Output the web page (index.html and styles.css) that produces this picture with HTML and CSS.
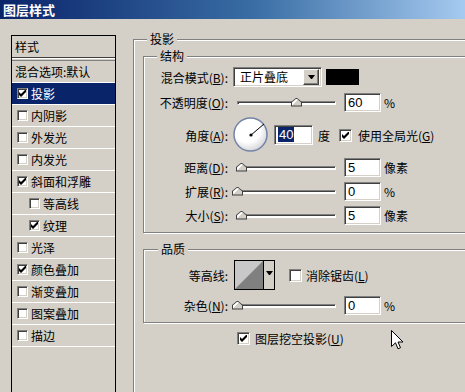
FILE: index.html
```html
<!DOCTYPE html>
<html lang="zh-CN">
<head>
    <meta charset="UTF-8">
    <title>图层样式</title>
    <link rel="stylesheet" href="styles.css">
</head>
<body>

    <div class="titlebar">图层样式</div>

    <div class="dialog">
        <!-- left: list of layer styles -->
        <div class="styles-list">
            <div class="list-head">样式</div>
            <div class="list-sep"></div>
            <div class="list-item plain">混合选项:默认</div>
            <div class="list-item selected"><span class="check small"><svg viewBox="0 0 7 7" width="7" height="7"><polygon points="0,2 2,4 7,-1 7,2 2,7 0,5" fill="#000"/></svg></span>投影</div>
            <div class="list-item"><span class="check small"></span>内阴影</div>
            <div class="list-item"><span class="check small"></span>外发光</div>
            <div class="list-item"><span class="check small"></span>内发光</div>
            <div class="list-item"><span class="check small"><svg viewBox="0 0 7 7" width="7" height="7"><polygon points="0,2 2,4 7,-1 7,2 2,7 0,5" fill="#000"/></svg></span>斜面和浮雕</div>
            <div class="list-item sub"><span class="check small"></span>等高线</div>
            <div class="list-item sub"><span class="check small"><svg viewBox="0 0 7 7" width="7" height="7"><polygon points="0,2 2,4 7,-1 7,2 2,7 0,5" fill="#000"/></svg></span>纹理</div>
            <div class="list-item"><span class="check small"></span>光泽</div>
            <div class="list-item"><span class="check small"><svg viewBox="0 0 7 7" width="7" height="7"><polygon points="0,2 2,4 7,-1 7,2 2,7 0,5" fill="#000"/></svg></span>颜色叠加</div>
            <div class="list-item"><span class="check small"></span>渐变叠加</div>
            <div class="list-item"><span class="check small"></span>图案叠加</div>
            <div class="list-item"><span class="check small"></span>描边</div>
        </div>

        <!-- right: drop shadow settings -->
        <div class="panel">
            <fieldset class="group outer">
                <legend>投影</legend>

                <fieldset class="group">
                    <legend>结构</legend>
                    <div class="rows">
                        <div class="row">
                            <span class="label">混合模式(<u>B</u>):</span>
                            <div class="select">
                                <span class="select-text">正片叠底</span>
                                <span class="select-btn"><span class="arrow"></span></span>
                            </div>
                            <span class="swatch"></span>
                        </div>
                        <div class="row">
                            <span class="label">不透明度(<u>O</u>):</span>
                            <div class="slider"><span class="track"></span><span class="thumb" style="left: 59px"></span></div>
                            <span class="field">60</span>
                            <span class="unit">%</span>
                        </div>
                        <div class="row">
                            <span class="label">角度(<u>A</u>):</span>
                            <svg class="dial" width="36" height="36" viewBox="0 0 36 36">
                                <defs>
                                    <radialGradient id="dialFill" cx="40%" cy="35%" r="65%">
                                        <stop offset="60%" stop-color="#ffffff"/>
                                        <stop offset="100%" stop-color="#d8d8dc"/>
                                    </radialGradient>
                                </defs>
                                <circle cx="17.5" cy="17.5" r="16.5" fill="url(#dialFill)" stroke="#7384a8" stroke-width="1.5"/>
                                <line x1="18" y1="18" x2="31" y2="7" stroke="#000" stroke-width="1"/>
                                <circle cx="18" cy="18" r="1.6" fill="#000"/>
                            </svg>
                            <span class="field wide"><span class="hilite">40</span></span>
                            <span class="unit deg">度</span>
                            <span class="check global"><svg viewBox="0 0 7 7" width="7" height="7"><polygon points="0,2 2,4 7,-1 7,2 2,7 0,5" fill="#000"/></svg></span>
                            <span class="check-label">使用全局光(<u>G</u>)</span>
                        </div>
                        <div class="row">
                            <span class="label">距离(<u>D</u>):</span>
                            <div class="slider"><span class="track"></span><span class="thumb" style="left: 4px"></span></div>
                            <span class="field">5</span>
                            <span class="unit">像素</span>
                        </div>
                        <div class="row">
                            <span class="label">扩展(<u>R</u>):</span>
                            <div class="slider"><span class="track"></span><span class="thumb" style="left: 0px"></span></div>
                            <span class="field">0</span>
                            <span class="unit">%</span>
                        </div>
                        <div class="row">
                            <span class="label">大小(<u>S</u>):</span>
                            <div class="slider"><span class="track"></span><span class="thumb" style="left: 4px"></span></div>
                            <span class="field">5</span>
                            <span class="unit">像素</span>
                        </div>
                    </div>
                </fieldset>

                <fieldset class="group quality">
                    <legend>品质</legend>
                    <div class="rows">
                        <div class="row">
                            <span class="label">等高线:</span>
                            <div class="contour">
                                <svg class="contour-preview" width="30" height="30" viewBox="0 0 30 30">
                                    <rect width="30" height="30" fill="#c8c8c8"/>
                                    <polygon points="0,30 30,0 30,30" fill="#808080"/>
                                </svg>
                                <span class="contour-btn"><span class="arrow"></span></span>
                            </div>
                            <span class="check antialias"></span>
                            <span class="check-label">消除锯齿(<u>L</u>)</span>
                        </div>
                        <div class="row">
                            <span class="label">杂色(<u>N</u>):</span>
                            <div class="slider"><span class="track"></span><span class="thumb" style="left: 0px"></span></div>
                            <span class="field">0</span>
                            <span class="unit">%</span>
                        </div>
                    </div>
                </fieldset>

                <div class="knockout">
                    <span class="check"><svg viewBox="0 0 7 7" width="7" height="7"><polygon points="0,2 2,4 7,-1 7,2 2,7 0,5" fill="#000"/></svg></span>
                    <span class="check-label">图层挖空投影(<u>U</u>)</span>
                </div>
            </fieldset>
        </div>
    </div>

    <!-- mouse pointer -->
    <svg class="cursor" width="13" height="21" viewBox="0 0 13 21">
        <path d="M0.5 0.5 L0.5 16.5 L4.5 12.8 L7 18.8 L9.5 17.7 L7 12 L12 12 Z" fill="#fff" stroke="#000" stroke-width="1"/>
    </svg>

</body>
</html>
```

FILE: styles.css
```css
html, body {
    margin: 0;
    padding: 0;
    overflow: hidden;
}
body {
    background: #d4d0c8;
    font-family: "Noto Sans CJK SC", "Liberation Sans", sans-serif;
    font-size: 12px;
    color: #000;
    height: 392px;
    position: relative;
}
u {
    text-decoration: underline;
    text-underline-offset: 1px;
}

.titlebar {
    height: 19px;
    padding-left: 3px;
    background: linear-gradient(to right, #0a246a, #3a6ea5 55%, #a6caf0);
    color: #fff;
    font-weight: bold;
    font-size: 13px;
    line-height: 19px;
}

.dialog {
    display: flex;
    align-items: flex-start;
    width: 600px;
}

/* style list */
.styles-list {
    margin-top: 16px;
    margin-left: 11px;
    width: 103px;
    height: 400px;
    border: 1px solid #000;
    flex-shrink: 0;
}
.list-head {
    height: 21px;
    line-height: 21px;
    padding-left: 3px;
    border-bottom: 1px solid #404040;
}
.list-sep {
    height: 1px;
    border-top: 1px solid #fff;
    border-bottom: 1px solid #808080;
}
.list-item {
    height: 21px;
    line-height: 21px;
    border-bottom: 1px solid #fff;
    display: flex;
    align-items: center;
    padding-left: 5px;
}
.list-item.plain {
    padding-left: 3px;
}
.list-item.sub {
    padding-left: 17px;
}
.list-item.selected {
    background: #0a246a;
    color: #fff;
}
.list-item .check {
    margin-right: 3px;
}

/* checkboxes */
.check {
    width: 13px;
    height: 13px;
    box-sizing: border-box;
    background: #fff;
    border: 1px solid;
    border-color: #808080 #fff #fff #808080;
    box-shadow: inset 1px 1px 0 #404040, inset -1px -1px 0 #d4d0c8;
    display: inline-flex;
    align-items: center;
    justify-content: center;
    flex-shrink: 0;
}
.check.small {
    width: 11px;
    height: 11px;
}
.check svg {
    display: block;
}

/* settings panel */
.panel {
    margin-top: 13px;
    margin-left: 17px;
    width: 420px;
    flex-shrink: 0;
}
.group {
    margin: 0;
    padding: 0;
    border: 1px solid #808080;
    box-shadow: inset 1px 1px 0 #fff, 1px 1px 0 #fff;
    min-width: 0;
}
.group legend {
    margin-left: 13px;
    padding: 0 3px;
    line-height: 14px;
    background: #d4d0c8;
}
.group.outer {
    min-height: 380px;
    padding-top: 3px;
}
.group.outer > .group {
    margin-left: 9px;
}
.group.quality {
    margin-top: 9px;
}
.group.quality legend {
    margin-left: 14px;
}

.rows {
    display: flex;
    flex-direction: column;
    gap: 5px;
    padding-top: 4px;
    padding-bottom: 7px;
}
.rows .row:nth-child(2) {
    margin-top: 1px;
}
.quality .rows {
    gap: 6px;
}
.quality .rows .row:nth-child(2) {
    margin-top: 0;
}
.row {
    display: flex;
    align-items: center;
    white-space: nowrap;
}
.label {
    width: 84px;
    text-align: right;
    flex-shrink: 0;
}

/* sunken controls */
.select,
.field {
    box-sizing: border-box;
    background: #fff;
    border: 1px solid;
    border-color: #808080 #fff #fff #808080;
    box-shadow: inset 1px 1px 0 #404040, inset -1px -1px 0 #d4d0c8;
}
.select {
    margin-left: 5px;
    width: 89px;
    height: 20px;
    display: flex;
    align-items: center;
    padding: 2px;
}
.select-text {
    flex: 1;
    padding-left: 4px;
    line-height: 16px;
}
.select-btn,
.contour-btn {
    box-sizing: border-box;
    background: #d4d0c8;
    display: flex;
    align-items: center;
    justify-content: center;
}
.select-btn {
    width: 16px;
    height: 16px;
    border: 1px solid;
    border-color: #fff #404040 #404040 #fff;
    box-shadow: inset -1px -1px 0 #808080;
}
.arrow {
    width: 1px;
    height: 0;
    border-left: 3px solid transparent;
    border-right: 3px solid transparent;
    border-top: 4px solid #000;
}
.swatch {
    margin-left: 4px;
    width: 33px;
    height: 16px;
    background: #000;
}

.field {
    margin-left: 3px;
    width: 37px;
    height: 19px;
    padding-left: 3px;
    font-family: "Liberation Sans", sans-serif;
    font-size: 13px;
    line-height: 17px;
}
.field.wide {
    margin-left: 5px;
    width: 39px;
    height: 20px;
    line-height: 18px;
}
.hilite {
    background: #0a246a;
    color: #fff;
    padding: 0 1px;
}
.unit {
    margin-left: 3px;
    font-size: 12px;
}
.unit.deg {
    margin-left: 5px;
}
.check.global {
    margin-left: 9px;
}
.check-label {
    margin-left: 6px;
}

/* sliders */
.slider {
    margin-left: 4px;
    width: 109px;
    height: 12px;
    position: relative;
    flex-shrink: 0;
}
.track {
    display: block;
    position: absolute;
    left: 5px;
    right: 5px;
    top: 4px;
    height: 4px;
    box-sizing: border-box;
    background: #fff;
    border: 1px solid;
    border-color: #808080 #fff #fff #808080;
    box-shadow: inset 1px 1px 0 #404040;
}
.thumb {
    position: absolute;
    top: 1px;
    width: 11px;
    height: 9px;
    background: #404040;
    clip-path: polygon(50% 0, 100% 50%, 100% 100%, 0 100%, 0 50%);
}
.thumb::after {
    content: "";
    position: absolute;
    left: 1px;
    top: 1px;
    width: 9px;
    height: 7px;
    background: linear-gradient(135deg, #fff 40%, #d4d0c8 41%);
    clip-path: polygon(50% 0, 100% 55%, 100% 100%, 0 100%, 0 55%);
}

.dial {
    margin-left: 5px;
    display: block;
    flex-shrink: 0;
}

/* contour */
.contour {
    margin-left: 6px;
    display: flex;
    border: 1px solid #000;
    height: 30px;
    box-sizing: border-box;
}
.contour-preview {
    display: block;
    width: 28px;
    height: 28px;
    border-right: 1px solid #000;
}
.contour-btn {
    width: 10px;
    height: 28px;
}
.contour-btn .arrow {
    margin-top: -4px;
}
.check.antialias {
    margin-left: 14px;
}
.antialias + .check-label {
    margin-left: 4px;
}

.knockout {
    margin-top: 7px;
    padding-left: 103px;
    display: flex;
    align-items: center;
}
.knockout .check-label {
    margin-left: 5px;
}

.cursor {
    position: absolute;
    left: 391px;
    top: 330px;
}
```
